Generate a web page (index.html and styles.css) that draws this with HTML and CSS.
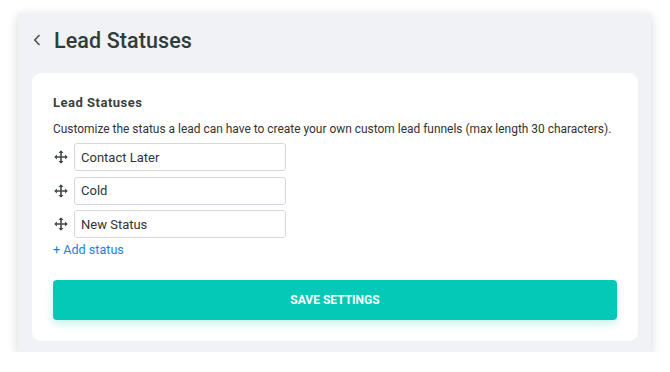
FILE: index.html
```html
<!doctype html>
<html>

<head>
  <title>Lead Statuses</title>
  <link rel="stylesheet" href="styles.css">
</head>

<body>
  <div class="panel">
    <div class="page-header">
      <span class="back-link">
        <svg width="8" height="12" viewBox="0 0 8 12"><path d="M6.5 1 L1.8 6 L6.5 11" fill="none" stroke="#4a5553" stroke-width="1.6"/></svg>
      </span>
      <h1 class="page-title">Lead Statuses</h1>
    </div>

    <div class="card">
      <h2 class="card-title">Lead Statuses</h2>
      <p class="card-text">Customize the status a lead can have to create your own custom lead funnels (max length 30 characters).</p>

      <div class="status-list">
        <div class="status-row">
          <span class="drag-handle">
            <svg width="14" height="14" viewBox="0 0 13 13"><path d="M6.5 1 V12 M1 6.5 H12" stroke="#3f4a48" stroke-width="1.5"/><path d="M4.2 2.7 L6.5 0.2 L8.8 2.7 Z M4.2 10.3 L6.5 12.8 L8.8 10.3 Z M2.7 4.2 L0.2 6.5 L2.7 8.8 Z M10.3 4.2 L12.8 6.5 L10.3 8.8 Z" fill="#3f4a48"/></svg>
          </span>
          <input class="status-input" type="text" value="Contact Later">
        </div>
        <div class="status-row">
          <span class="drag-handle">
            <svg width="14" height="14" viewBox="0 0 13 13"><path d="M6.5 1 V12 M1 6.5 H12" stroke="#3f4a48" stroke-width="1.5"/><path d="M4.2 2.7 L6.5 0.2 L8.8 2.7 Z M4.2 10.3 L6.5 12.8 L8.8 10.3 Z M2.7 4.2 L0.2 6.5 L2.7 8.8 Z M10.3 4.2 L12.8 6.5 L10.3 8.8 Z" fill="#3f4a48"/></svg>
          </span>
          <input class="status-input" type="text" value="Cold">
        </div>
        <div class="status-row">
          <span class="drag-handle">
            <svg width="14" height="14" viewBox="0 0 13 13"><path d="M6.5 1 V12 M1 6.5 H12" stroke="#3f4a48" stroke-width="1.5"/><path d="M4.2 2.7 L6.5 0.2 L8.8 2.7 Z M4.2 10.3 L6.5 12.8 L8.8 10.3 Z M2.7 4.2 L0.2 6.5 L2.7 8.8 Z M10.3 4.2 L12.8 6.5 L10.3 8.8 Z" fill="#3f4a48"/></svg>
          </span>
          <input class="status-input" type="text" value="New Status">
        </div>
      </div>

      <a class="add-link" href="#">+ Add status</a>

      <button class="save-button" type="button">SAVE SETTINGS</button>
    </div>
  </div>
</body>

</html>
```

FILE: styles.css
```css
body {
  margin: 0;
  background-color: #fff;
  font-family: Roboto, 'Liberation Sans', sans-serif;
}

/* gray settings panel */
.panel {
  width: 633px;
  height: 339px;
  box-sizing: border-box;
  margin: 13px 0 0 18px;
  padding: 0 13px 11px 14px;
  background-color: #f1f2f6;
  box-shadow: 0 3px 10px rgba(0, 0, 0, 0.16);
}

.page-header {
  display: flex;
  align-items: center;
  height: 54px;
  margin-bottom: 6px;
}

.back-link {
  display: flex;
  width: 21px;
  padding-left: 1px;
}

.page-title {
  margin: 0;
  font-size: 21.5px;
  font-weight: 500;
  color: #2f3d3a;
  letter-spacing: 0.1px;
}

/* white card */
.card {
  background-color: #fff;
  border-radius: 9px;
  padding: 22px 21px 21px 21px;
}

.card-title {
  margin: 0;
  font-size: 13px;
  line-height: 16px;
  font-weight: 700;
  color: #37423f;
  letter-spacing: 0.5px;
}

.card-text {
  margin: 10px 0 6px 0;
  font-size: 11.95px;
  line-height: 16px;
  color: #333;
  white-space: nowrap;
}

.status-list {
  display: flex;
  flex-direction: column;
  gap: 5.5px;
}

.status-row {
  display: flex;
  align-items: center;
}

.drag-handle {
  display: flex;
  width: 21px;
  padding-left: 1px;
  box-sizing: border-box;
}

.status-input {
  width: 212px;
  height: 28px;
  box-sizing: border-box;
  border: 1.5px solid #d6d7e1;
  border-radius: 3px;
  padding: 0 6px;
  font-family: Roboto, 'Liberation Sans', sans-serif;
  font-size: 13px;
  color: #333;
}

.add-link {
  display: block;
  margin-top: 4px;
  font-size: 12.6px;
  line-height: 16px;
  color: #1f7fd6;
  text-decoration: none;
}

.save-button {
  display: block;
  width: 100%;
  height: 40px;
  margin-top: 22px;
  border: none;
  border-radius: 4px;
  background-color: #04c9b6;
  color: #fff;
  font-family: Roboto, 'Liberation Sans', sans-serif;
  font-size: 12px;
  font-weight: 700;
  box-shadow: 0 4px 8px rgba(4, 201, 182, 0.22);
}
```
